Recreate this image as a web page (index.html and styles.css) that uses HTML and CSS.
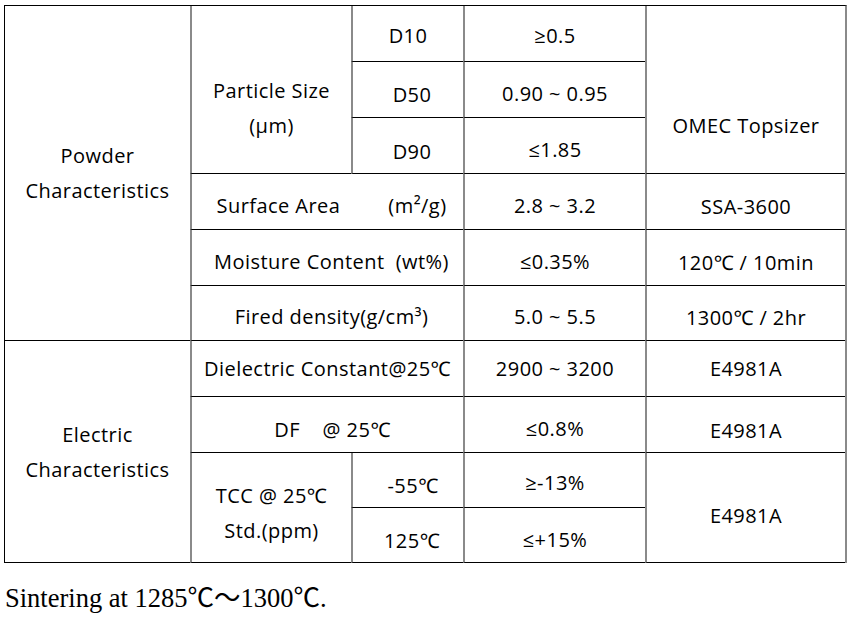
FILE: index.html
```html
<!DOCTYPE html>
<html>
<head>
<meta charset="utf-8">
<link rel="stylesheet" href="styles.css">
</head>
<body>
<div class="sheet">
  <div class="spec">
    <div class="cell c1 span-r6">Powder<br>Characteristics</div>
    <div class="cell span-r3 o37">Particle Size<br>(µm)</div>
    <div class="cell o3">D10</div>
    <div class="cell o3">≥0.5</div>
    <div class="cell span-r3 o72">OMEC Topsizer</div>

    <div class="cell o10 pl8">D50</div>
    <div class="cell o8">0.90 ~ 0.95</div>

    <div class="cell o12 pl8">D90</div>
    <div class="cell o8">≤1.85</div>

    <div class="cell span-c2 o8 pl8"><span class="gap">Surface Area</span>(m²/g)</div>
    <div class="cell o7">2.8 ~ 3.2</div>
    <div class="cell o10">SSA-3600</div>

    <div class="cell span-c2 o8 pl8">Moisture Content&nbsp; (wt%)</div>
    <div class="cell o8">≤0.35%</div>
    <div class="cell o10">120℃ / 10min</div>

    <div class="cell span-c2 o7 pl8">Fired density(g/cm³)</div>
    <div class="cell o6">5.0 ~ 5.5</div>
    <div class="cell o9">1300℃ / 2hr</div>

    <div class="cell c1 span-r4">Electric<br>Characteristics</div>
    <div class="cell span-c2">Dielectric Constant@25℃</div>
    <div class="cell">2900 ~ 3200</div>
    <div class="cell">E4981A</div>

    <div class="cell span-c2 o9 pl10">DF&nbsp;&nbsp;&nbsp; @ 25℃</div>
    <div class="cell o8">≤0.8%</div>
    <div class="cell o11">E4981A</div>

    <div class="cell span-r2 o11">TCC @ 25℃<br>Std.(ppm)</div>
    <div class="cell o11 pl10">-55℃</div>
    <div class="cell o4">≥-13%</div>
    <div class="cell span-r2 o15">E4981A</div>

    <div class="cell o11 pl8">125℃</div>
    <div class="cell o8">≤+15%</div>
  </div>
  <p class="note">Sintering at 1285℃～1300℃.</p>
</div>
</body>
</html>
```
FILE: styles.css
```css
html, body {
  margin: 0;
  padding: 0;
  background: #ffffff;
}

.sheet {
  padding: 5px 0 0 4px;
}

.spec {
  display: grid;
  grid-template-columns: 185px 161px 112px 182px 200px;
  grid-template-rows: 56px 56px 56px 56px 56px 55px 56px 56px 55px 55px;
  width: 840px;
  border-top: 1px solid #000;
  border-left: 1px solid #000;
  border-right: 2px solid #8a8a8a;
  font-family: "Open Sans", "Noto Sans", "Noto Sans CJK SC", sans-serif;
  font-size: 20px;
  letter-spacing: 0.45px;
  color: #000;
}

.cell {
  box-sizing: border-box;
  display: flex;
  align-items: center;
  justify-content: center;
  text-align: center;
  line-height: 35px;
  border-bottom: 1px solid #000;
  border-left: 2px solid #8a8a8a;
  white-space: nowrap;
}

.c1 {
  grid-column: 1;
  border-left: 0;
}

.span-r6 { grid-row: span 6; }
.span-r4 { grid-row: span 4; }
.span-r3 { grid-row: span 3; }
.span-r2 { grid-row: span 2; }
.span-c2 { grid-column: span 2; }

.gap { margin-right: 48px; }

.pl8 { padding-left: 8px; }
.pl10 { padding-left: 10px; }

.o3 { padding-top: 3px; }
.o4 { padding-top: 4px; }
.o6 { padding-top: 6px; }
.o7 { padding-top: 7px; }
.o8 { padding-top: 8px; }
.o9 { padding-top: 9px; }
.o10 { padding-top: 10px; }
.o11 { padding-top: 11px; }
.o12 { padding-top: 12px; }
.o15 { padding-top: 15px; }
.o37 { padding-top: 37px; }
.o72 { padding-top: 72px; }

.note {
  margin: 20px 0 0 1px;
  font-family: "Liberation Serif", "Noto Sans CJK SC", serif;
  font-size: 26.5px;
  line-height: 30px;
  color: #000;
}
```
